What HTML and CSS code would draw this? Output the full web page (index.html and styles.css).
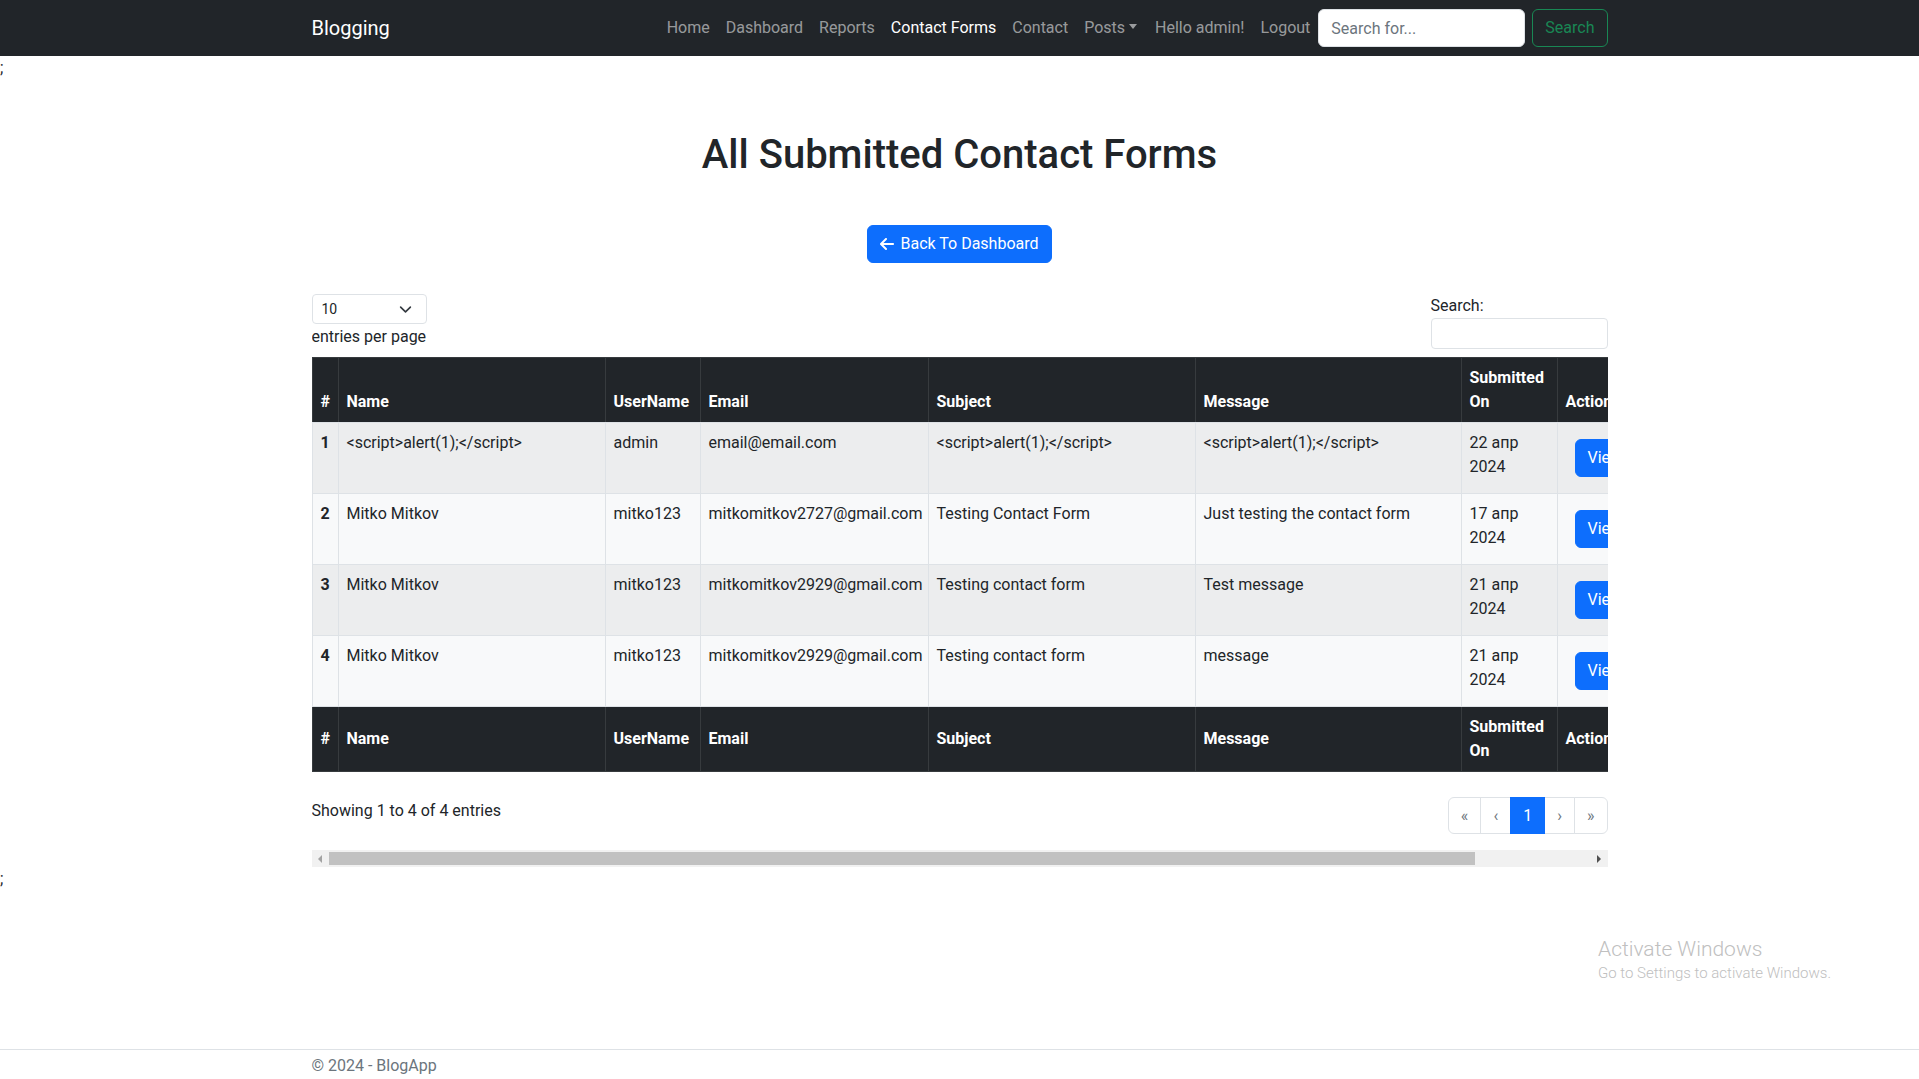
FILE: index.html
```html
<!DOCTYPE html>
<html lang="en">
<head>
<meta charset="utf-8">
<title>Contact Forms - BlogApp</title>
<link rel="stylesheet" href="styles.css">
</head>
<body>
<header class="navbar">
  <div class="container nav-inner">
    <a class="brand" href="#">Blogging</a>
    <ul class="nav-links">
      <li><a class="nav-link" href="#">Home</a></li>
      <li><a class="nav-link" href="#">Dashboard</a></li>
      <li><a class="nav-link" href="#">Reports</a></li>
      <li><a class="nav-link active" href="#">Contact Forms</a></li>
      <li><a class="nav-link" href="#">Contact</a></li>
      <li><a class="nav-link" href="#">Posts<span class="caret"></span></a></li>
      <li><span class="nav-link hello">Hello admin!</span></li>
      <li><a class="nav-link" href="#">Logout</a></li>
    </ul>
    <form class="nav-search">
      <input class="nav-input" type="text" placeholder="Search for...">
      <button class="btn-outline-success" type="button">Search</button>
    </form>
  </div>
</header>

<div class="page">
  <div class="stray">;</div>
  <main class="container main">
    <h1 class="title">All Submitted Contact Forms</h1>
    <div class="center-row">
      <a class="btn-primary" href="#">
        <svg class="arrow" viewBox="0 0 448 512" width="14" height="16" aria-hidden="true"><path fill="#fff" d="M9.4 233.4c-12.5 12.5-12.5 32.8 0 45.3l160 160c12.5 12.5 32.8 12.5 45.3 0s12.5-32.8 0-45.3L109.2 288 416 288c17.7 0 32-14.3 32-32s-14.3-32-32-32l-306.7 0L214.6 118.6c12.5-12.5 12.5-32.8 0-45.3s-32.8-12.5-45.3 0l-160 160z"/></svg>
        <span>Back To Dashboard</span>
      </a>
    </div>

    <div class="dt-wrap">
      <div class="dt-top">
        <div class="dt-length">
          <div class="dt-select">
            <span>10</span>
            <svg width="13" height="13" viewBox="0 0 16 16" aria-hidden="true"><path fill="none" stroke="#343a40" stroke-linecap="round" stroke-linejoin="round" stroke-width="2" d="m2 5 6 6 6-6"/></svg>
          </div>
          <div class="dt-label">entries per page</div>
        </div>
        <div class="dt-search">
          <div class="dt-label">Search:</div>
          <input class="dt-input" type="search">
        </div>
      </div>

      <div class="table-clip">
        <table class="data-table">
          <colgroup>
            <col class="c-num"><col class="c-name"><col class="c-user"><col class="c-email"><col class="c-subj"><col class="c-msg"><col class="c-date"><col class="c-act">
          </colgroup>
          <thead>
            <tr><th>#</th><th>Name</th><th>UserName</th><th>Email</th><th>Subject</th><th>Message</th><th>Submitted On</th><th>Action</th></tr>
          </thead>
          <tbody>
            <tr class="odd">
              <th>1</th><td>&lt;script&gt;alert(1);&lt;/script&gt;</td><td>admin</td><td>email@email.com</td><td>&lt;script&gt;alert(1);&lt;/script&gt;</td><td>&lt;script&gt;alert(1);&lt;/script&gt;</td><td>22 апр 2024</td>
              <td class="act"><a class="btn-view" href="#">View</a></td>
            </tr>
            <tr class="even">
              <th>2</th><td>Mitko Mitkov</td><td>mitko123</td><td>mitkomitkov2727@gmail.com</td><td>Testing Contact Form</td><td>Just testing the contact form</td><td>17 апр 2024</td>
              <td class="act"><a class="btn-view" href="#">View</a></td>
            </tr>
            <tr class="odd">
              <th>3</th><td>Mitko Mitkov</td><td>mitko123</td><td>mitkomitkov2929@gmail.com</td><td>Testing contact form</td><td>Test message</td><td>21 апр 2024</td>
              <td class="act"><a class="btn-view" href="#">View</a></td>
            </tr>
            <tr class="even">
              <th>4</th><td>Mitko Mitkov</td><td>mitko123</td><td>mitkomitkov2929@gmail.com</td><td>Testing contact form</td><td>message</td><td>21 апр 2024</td>
              <td class="act"><a class="btn-view" href="#">View</a></td>
            </tr>
          </tbody>
          <tfoot>
            <tr><th>#</th><th>Name</th><th>UserName</th><th>Email</th><th>Subject</th><th>Message</th><th>Submitted On</th><th>Action</th></tr>
          </tfoot>
        </table>
      </div>

      <div class="dt-bottom">
        <div class="dt-info">Showing 1 to 4 of 4 entries</div>
        <ul class="pagination">
          <li class="page-item disabled"><span class="page-link">«</span></li>
          <li class="page-item disabled"><span class="page-link">‹</span></li>
          <li class="page-item active"><span class="page-link">1</span></li>
          <li class="page-item disabled"><span class="page-link">›</span></li>
          <li class="page-item disabled"><span class="page-link">»</span></li>
        </ul>
      </div>

      <div class="hscroll">
        <div class="sb-arrow"><span class="tri-left"></span></div>
        <div class="sb-track"><div class="sb-thumb"></div></div>
        <div class="sb-arrow"><span class="tri-right"></span></div>
      </div>
    </div>
  </main>
  <div class="stray">;</div>
</div>

<footer class="footer">
  <div class="container">© 2024 - BlogApp</div>
</footer>

<div class="watermark">
  <div class="wm-1">Activate Windows</div>
  <div class="wm-2">Go to Settings to activate Windows.</div>
</div>
</body>
</html>
```
FILE: styles.css
```css
* { box-sizing: border-box; }

html, body { margin: 0; padding: 0; }

body {
  font-family: Roboto, "Liberation Sans", Arial, sans-serif;
  font-size: 16px;
  line-height: 1.5;
  color: #212529;
  background: #fff;
  min-height: 100vh;
  display: flex;
  flex-direction: column;
}

.container {
  width: 1320px;
  margin: 0 auto;
  padding: 0 12px;
}

/* navbar */
.navbar {
  background: #212529;
  padding: 8px 0;
}
.nav-inner {
  display: flex;
  align-items: center;
}
.brand {
  font-size: 20px;
  line-height: 30px;
  padding: 5px 0;
  color: #fff;
  text-decoration: none;
}
.nav-links {
  display: flex;
  list-style: none;
  margin: 0 0 0 auto;
  padding: 0;
}
.nav-link {
  display: block;
  padding: 8px;
  line-height: 24px;
  color: rgba(255, 255, 255, 0.55);
  text-decoration: none;
}
.nav-link.active { color: #fff; }
.hello { padding-left: 10px; }
.caret {
  display: inline-block;
  margin-left: 4px;
  vertical-align: 4px;
  border-top: 5px solid;
  border-right: 4.5px solid transparent;
  border-left: 4.5px solid transparent;
  border-bottom: 0;
}
.nav-search {
  display: flex;
  gap: 7px;
  margin: 0;
}
.nav-input {
  width: 207px;
  height: 38px;
  padding: 6px 12px;
  border: 1px solid #dee2e6;
  border-radius: 6px;
  font: inherit;
  color: #212529;
  background: #fff;
}
.nav-input::placeholder { color: #6c757d; }
.btn-outline-success {
  height: 38px;
  padding: 6px 12px;
  border: 1px solid #198754;
  border-radius: 6px;
  background: transparent;
  color: #198754;
  font: inherit;
  line-height: 24px;
}

/* page */
.page {
  flex: 1 0 auto;
  display: flex;
  flex-direction: column;
}
.stray {
  height: 24px;
  line-height: 24px;
  color: #212529;
}

.title {
  margin: 51px 0 46px;
  font-size: 40px;
  font-weight: 500;
  line-height: 48px;
  text-align: center;
}
.center-row {
  display: flex;
  justify-content: center;
}
.btn-primary {
  display: inline-flex;
  align-items: center;
  gap: 6px;
  height: 38px;
  padding: 6px 12px;
  border: 1px solid #0d6efd;
  border-radius: 6px;
  background: #0d6efd;
  color: #fff;
  text-decoration: none;
  line-height: 24px;
}

/* datatable */
.dt-wrap {
  margin-top: 31px;
  overflow: hidden;
}
.dt-top {
  display: flex;
  justify-content: space-between;
  align-items: flex-start;
  margin-bottom: 8px;
}
.dt-select {
  width: 115px;
  height: 30px;
  border: 1px solid #dee2e6;
  border-radius: 4px;
  padding: 0 14px 0 9px;
  display: flex;
  align-items: center;
  justify-content: space-between;
  font-size: 14px;
}
.dt-label { line-height: 24px; }
.dt-length .dt-label { margin-top: 1px; }
.dt-search { width: 177px; }
.dt-input {
  display: block;
  width: 177px;
  height: 31px;
  border: 1px solid #dee2e6;
  border-radius: 4px;
  margin: 0;
}

.table-clip { overflow: hidden; }
.data-table {
  width: 1415px;
  table-layout: fixed;
  border-collapse: collapse;
}
.c-num { width: 26px; }
.c-name { width: 267px; }
.c-user { width: 95px; }
.c-email { width: 228px; }
.c-subj { width: 267px; }
.c-msg { width: 266px; }
.c-date { width: 96px; }
.c-act { width: 170px; }

.data-table th,
.data-table td {
  padding: 8px;
  border: 1px solid #dee2e6;
  text-align: left;
  line-height: 24px;
  white-space: normal;
}
.data-table thead th,
.data-table tfoot th {
  background: #212529;
  color: #fff;
  font-weight: 700;
  border-color: #373b3e;
}
.data-table thead th {
  vertical-align: bottom;
  border-bottom-color: #dee2e6;
}
.data-table tfoot th {
  vertical-align: middle;
}
.data-table tbody th,
.data-table tbody td { vertical-align: top; }
.data-table tbody th { font-weight: 700; }
.data-table tr.odd > * { background: #ecedee; }
.data-table tr.even > * { background: #f8f9fa; }
.data-table td.act {
  padding: 16px 8px 16px 17px;
  vertical-align: middle;
}
.btn-view {
  display: inline-block;
  height: 38px;
  padding: 6px 12px;
  border: 1px solid #0d6efd;
  border-radius: 6px;
  background: #0d6efd;
  color: #fff;
  text-decoration: none;
  line-height: 24px;
}

.dt-bottom {
  display: flex;
  justify-content: space-between;
  align-items: flex-start;
  margin-top: 25px;
}
.dt-info {
  padding-top: 2px;
  line-height: 24px;
}
.pagination {
  display: flex;
  list-style: none;
  margin: 0;
  padding: 0;
}
.page-link {
  display: block;
  padding: 6px 12px;
  line-height: 23px;
  border: 1px solid #dee2e6;
  margin-left: -1px;
  color: #6c757d;
  background: #fff;
}
.page-item:first-child .page-link {
  margin-left: 0;
  border-radius: 6px 0 0 6px;
}
.page-item:last-child .page-link { border-radius: 0 6px 6px 0; }
.page-item.active .page-link {
  background: #0d6efd;
  border-color: #0d6efd;
  color: #fff;
  position: relative;
}

/* fake horizontal scrollbar */
.hscroll {
  display: flex;
  height: 17px;
  margin-top: 16px;
  background: #f1f1f1;
}
.sb-arrow {
  width: 17px;
  display: flex;
  align-items: center;
  justify-content: center;
}
.tri-left {
  border-right: 4px solid #a3a3a3;
  border-top: 4px solid transparent;
  border-bottom: 4px solid transparent;
}
.tri-right {
  border-left: 4px solid #505050;
  border-top: 4px solid transparent;
  border-bottom: 4px solid transparent;
}
.sb-track {
  flex: 1;
  padding: 2px 0;
}
.sb-thumb {
  width: 1146px;
  height: 13px;
  background: #c1c1c1;
}

/* footer */
.footer {
  border-top: 1px solid #dee2e6;
  height: 30px;
  padding-top: 4px;
  line-height: 24px;
  color: #6c757d;
}

/* OS watermark overlay */
.watermark {
  position: absolute;
  left: 1598px;
  top: 936px;
  color: #c0c0c0;
  font-weight: 300;
  white-space: nowrap;
}
.wm-1 { font-size: 21px; line-height: 27px; }
.wm-2 { font-size: 15px; line-height: 20px; }
```
